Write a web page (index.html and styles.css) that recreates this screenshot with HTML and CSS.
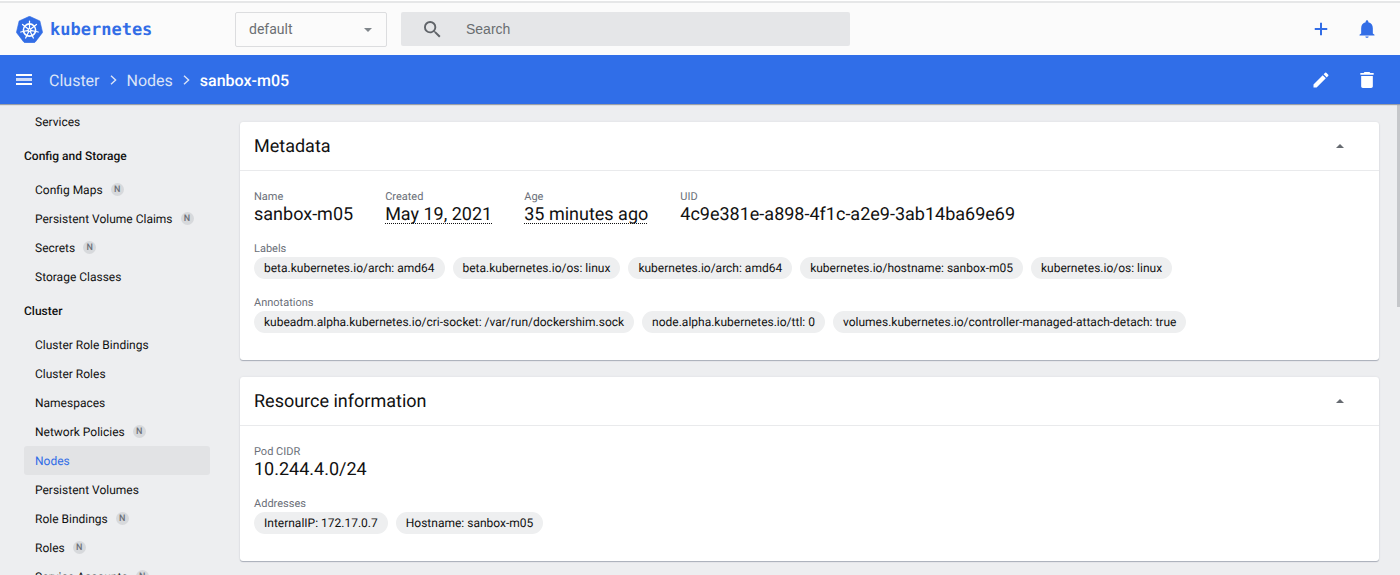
FILE: index.html
```html
<!DOCTYPE html>
<html lang="en">
<head>
<meta charset="utf-8">
<title>sanbox-m05 - Kubernetes Dashboard</title>
<link rel="stylesheet" href="styles.css">
</head>
<body>
<header class="topbar">
  <a class="brand" href="#">
    <svg class="brand-logo" viewBox="0 0 26 26" aria-hidden="true">
      <path fill="#326de6" d="M13 .3 23 4.8 25.6 15.8 18.8 24.7Q18.200 25.700 17 25.700H9Q7.800 25.700 7.200 24.700L.4 15.800 3 4.800Z" stroke="#326de6" stroke-width=".6" stroke-linejoin="round"/>
      <g fill="none" stroke="#fff" stroke-linecap="round">
        <circle cx="13" cy="13.500" r="5.900" stroke-width="1.500"/>
        <path stroke-width="1.200" d="M13 13.500V4.900M13 13.500 19.700 8.100M13 13.500 21.400 15.400M13 13.500 16.700 21.200M13 13.500 9.300 21.200M13 13.500 4.600 15.400M13 13.500 6.300 8.100"/>
      </g>
      <circle cx="13" cy="13.500" r="1.800" fill="#fff"/>
      <circle cx="13" cy="13.500" r=".7" fill="#326de6"/>
    </svg>
    <span class="brand-name">kubernetes</span>
  </a>
  <div class="namespace">
    <select class="namespace-select" aria-label="Namespace"><option>default</option></select>
    <svg class="namespace-arrow" viewBox="0 0 10 5" aria-hidden="true"><path d="M0 0h10L5 5z" fill="#80868b"/></svg>
  </div>
  <form class="search">
    <svg class="search-icon" viewBox="0 0 18 18" aria-hidden="true"><path fill="#5f6368" d="M12.500 11h-.79l-.28-.27A6.470 6.470 0 0 0 13 6.500 6.500 6.500 0 1 0 6.500 13c1.610 0 3.090-.59 4.230-1.570l.27.28v.79l5 4.990L17.490 16l-4.990-5zm-6 0C4.010 11 2 8.990 2 6.500S4.010 2 6.500 2 11 4.010 11 6.500 8.990 11 6.500 11z"/></svg>
    <input class="search-input" type="search" placeholder="Search" aria-label="Search">
  </form>
  <div class="actions">
    <button class="icon-button" type="button" aria-label="Create"><svg class="icon" viewBox="0 0 24 24"><path d="M19.500 13.200h-6.300v6.300h-2.400v-6.300H4.500v-2.400h6.300V4.500h2.400v6.300h6.300z"/></svg></button>
    <button class="icon-button" type="button" aria-label="Notifications"><svg class="icon" viewBox="0 0 24 24"><path d="M12 22.500c1.100 0 2-.7 2-1.600h-4c0 .9.900 1.600 2 1.600zM19 17.500v-6.500c0-3.500-2-6.300-5.400-7.100V3.200C13.600 2.300 12.900 1.500 12 1.500s-1.600.8-1.600 1.700v.7C7 4.700 5 7.500 5 11v6.500l-2 1.300v1h18v-1z"/></svg></button>
  </div>
</header>

<div class="bluebar">
  <button class="menu-button" type="button" aria-label="Toggle menu"><svg class="menu-icon" viewBox="0 0 16 12"><path d="M0 1h16M0 10h16" stroke="#fff" stroke-width="2"/><path d="M0 5.500h16" stroke="#fff" stroke-width="3" stroke-opacity=".75"/></svg></button>
  <nav class="crumbs" aria-label="Breadcrumb">
    <a href="#">Cluster</a>
    <svg class="chevron" viewBox="0 0 7 10" aria-hidden="true"><path d="M1 .7 5.600 5 1 9.300"/></svg>
    <a href="#">Nodes</a>
    <svg class="chevron" viewBox="0 0 7 10" aria-hidden="true"><path d="M1 .7 5.600 5 1 9.300"/></svg>
    <span class="crumb-current">sanbox-m05</span>
  </nav>
  <div class="actions">
    <button class="icon-button light" type="button" aria-label="Edit"><svg class="icon" viewBox="0 0 24 24"><path d="M3 17.250V21h3.750L17.810 9.940l-3.750-3.750L3 17.250zM20.710 7.040a1 1 0 0 0 0-1.410l-2.340-2.340a1 1 0 0 0-1.410 0l-1.830 1.830 3.750 3.750 1.830-1.830z"/></svg></button>
    <button class="icon-button light" type="button" aria-label="Delete"><svg class="icon" viewBox="0 0 24 24"><path d="M5 19.500c0 1.100.9 2 2 2h10c1.100 0 2-.9 2-2V7.200H5v12.300zM20 3.500h-4l-1-1H9l-1 1H4v2.300h16V3.500z"/></svg></button>
  </div>
</div>

<div class="layout">
  <nav class="sidebar" aria-label="Resources">
    <a class="nav-item" href="#">Services</a>
    <h2 class="nav-group">Config and Storage</h2>
    <a class="nav-item" href="#">Config Maps <span class="badge">N</span></a>
    <a class="nav-item" href="#">Persistent Volume Claims <span class="badge">N</span></a>
    <a class="nav-item" href="#">Secrets <span class="badge">N</span></a>
    <a class="nav-item" href="#">Storage Classes</a>
    <h2 class="nav-group">Cluster</h2>
    <a class="nav-item" href="#">Cluster Role Bindings</a>
    <a class="nav-item" href="#">Cluster Roles</a>
    <a class="nav-item" href="#">Namespaces</a>
    <a class="nav-item" href="#">Network Policies <span class="badge">N</span></a>
    <a class="nav-item active" href="#" aria-current="page">Nodes</a>
    <a class="nav-item" href="#">Persistent Volumes</a>
    <a class="nav-item" href="#">Role Bindings <span class="badge">N</span></a>
    <a class="nav-item" href="#">Roles <span class="badge">N</span></a>
    <a class="nav-item" href="#">Service Accounts <span class="badge">N</span></a>
  </nav>

  <main class="content">
    <section class="card">
      <header class="card-header">
        <h1 class="card-title">Metadata</h1>
        <button class="collapse" type="button" aria-label="Collapse Metadata"><svg class="collapse-icon" viewBox="0 0 8 4"><path d="M0 4 4 0l4 4z"/></svg></button>
      </header>
      <div class="card-body">
        <div class="properties">
          <div class="property"><div class="label">Name</div><div class="value">sanbox-m05</div></div>
          <div class="property"><div class="label">Created</div><div class="value"><span class="dotted">May 19, 2021</span></div></div>
          <div class="property"><div class="label">Age</div><div class="value"><span class="dotted">35 minutes ago</span></div></div>
          <div class="property"><div class="label">UID</div><div class="value">4c9e381e-a898-4f1c-a2e9-3ab14ba69e69</div></div>
        </div>
        <div class="property">
          <div class="label">Labels</div>
          <div class="chips">
            <span class="chip">beta.kubernetes.io/arch: amd64</span>
            <span class="chip">beta.kubernetes.io/os: linux</span>
            <span class="chip">kubernetes.io/arch: amd64</span>
            <span class="chip">kubernetes.io/hostname: sanbox-m05</span>
            <span class="chip">kubernetes.io/os: linux</span>
          </div>
        </div>
        <div class="property">
          <div class="label">Annotations</div>
          <div class="chips">
            <span class="chip">kubeadm.alpha.kubernetes.io/cri-socket: /var/run/dockershim.sock</span>
            <span class="chip">node.alpha.kubernetes.io/ttl: 0</span>
            <span class="chip">volumes.kubernetes.io/controller-managed-attach-detach: true</span>
          </div>
        </div>
      </div>
    </section>

    <section class="card">
      <header class="card-header">
        <h1 class="card-title">Resource information</h1>
        <button class="collapse" type="button" aria-label="Collapse Resource information"><svg class="collapse-icon" viewBox="0 0 8 4"><path d="M0 4 4 0l4 4z"/></svg></button>
      </header>
      <div class="card-body">
        <div class="property"><div class="label">Pod CIDR</div><div class="value">10.244.4.0/24</div></div>
        <div class="property">
          <div class="label">Addresses</div>
          <div class="chips">
            <span class="chip">InternalIP: 172.17.0.7</span>
            <span class="chip">Hostname: sanbox-m05</span>
          </div>
        </div>
      </div>
    </section>
  </main>
  <div class="scroll-track" aria-hidden="true"><div class="scroll-thumb"></div></div>
</div>
</body>
</html>
```
FILE: styles.css
```css
* { box-sizing: border-box; }

body {
  margin: 0;
  height: 100vh;
  display: flex;
  flex-direction: column;
  overflow: hidden;
  background: #edeef0;
  color: #111;
  font-family: Roboto, "Liberation Sans", sans-serif;
  font-size: 12px;
  text-rendering: geometricPrecision;
}

a { color: inherit; text-decoration: none; }

button {
  display: flex;
  align-items: center;
  justify-content: center;
  padding: 0;
  border: 0;
  background: none;
  cursor: pointer;
}

/* Top bar */
.topbar {
  flex: none;
  display: flex;
  align-items: center;
  height: 55px;
  padding: 3px 20px 0 16px;
  background: #fbfbfb;
  box-shadow: inset 0 1px #fff, inset 0 3px #e6e7e8;
}

.brand {
  display: flex;
  align-items: center;
  gap: 7px;
  width: 219px;
  color: #326de6;
  font-family: "DejaVu Sans Mono", monospace;
  font-size: 17px;
  font-weight: 700;
}

.brand-logo { width: 27px; height: 27px; }
.brand-name { padding-top: 2px; }

.namespace { position: relative; width: 152px; margin-right: 14px; }

.namespace-select {
  display: block;
  appearance: none;
  width: 100%;
  height: 35px;
  padding: 0 32px 0 13px;
  border: 1px solid #dcdddf;
  border-radius: 2px;
  background: transparent;
  color: #6b6f73;
  font: inherit;
  font-size: 14px;
}

.namespace-arrow {
  position: absolute;
  top: 16px;
  right: 15px;
  width: 8px;
  height: 4px;
  pointer-events: none;
}

.search {
  display: flex;
  align-items: center;
  gap: 25px;
  width: 449px;
  height: 34px;
  padding: 0 23px;
  border-radius: 2px;
  background: #e5e6e8;
}

.search-icon { flex: none; width: 17px; height: 17px; }

.search-input {
  flex: 1;
  min-width: 0;
  padding: 0;
  border: 0;
  outline: 0;
  background: transparent;
  font-family: "Liberation Sans", sans-serif;
  font-size: 14px;
}

.search-input::placeholder { color: #696d70; opacity: 1; }

.actions { display: flex; gap: 19px; margin-left: auto; }

.icon-button { width: 27px; height: 27px; color: #326de6; }
.icon-button.light { color: #fff; }
.icon { width: 20px; height: 20px; fill: currentColor; }

/* Breadcrumb bar */
.bluebar {
  flex: none;
  z-index: 1;
  display: flex;
  align-items: center;
  height: 49px;
  padding: 1px 20px 0 16px;
  background: #306ee8;
  box-shadow: 0 1px 1px #9a9fa8;
  color: #fff;
}

.menu-button { width: 16px; height: 20px; margin-right: 17px; }
.menu-icon { width: 16px; height: 12px; }

.crumbs {
  display: flex;
  align-items: center;
  gap: 10px;
  color: #dbe4f7;
  font-size: 16px;
}

.chevron { width: 7px; height: 10px; fill: none; stroke: #dbe4f7; stroke-width: 1.4; }
.crumb-current { color: #fff; font-weight: 500; }

/* Body */
.layout { flex: 1; min-height: 0; display: flex; }

.sidebar {
  flex: none;
  width: 240px;
  padding: 3px 30px 0 24px;
  overflow: hidden;
}

.nav-item {
  display: flex;
  align-items: center;
  gap: 8px;
  height: 29px;
  padding-left: 11px;
  border-radius: 3px;
}

.nav-item.active { background: #e2e3e5; color: #326de6; }

.nav-group {
  margin: 0;
  padding-top: 2px;
  font-size: 12px;
  font-weight: 500;
  line-height: 37px;
}

.badge {
  width: 13px;
  height: 13px;
  border-radius: 50%;
  background: #d7d9dc;
  color: #6b7078;
  font-size: 9px;
  font-weight: 500;
  line-height: 14px;
  text-align: center;
}

.content {
  flex: 1;
  min-width: 0;
  display: flex;
  flex-direction: column;
  gap: 17px;
  padding: 18px 18px 14px 0;
}

.card {
  border-radius: 3px;
  background: #fff;
  box-shadow: 0 1px 1px #a8adb8, 0 0 2px #d8dadd;
}

.card-header {
  display: flex;
  align-items: center;
  justify-content: space-between;
  height: 49px;
  padding: 0 29px 0 14px;
  border-bottom: 1px solid #e9eaec;
}

.card-title { margin: 0; font-size: 18px; font-weight: 400; }

.collapse { width: 20px; height: 20px; }
.collapse-icon { width: 8px; height: 4px; fill: #666a70; }

.card-body {
  display: flex;
  flex-direction: column;
  gap: 16px;
  padding: 18px 14px 27px;
}

.properties { display: flex; gap: 32px; }

.label { color: #6b7079; font-size: 11px; line-height: 15px; }
.value { margin-top: 1px; font-size: 18px; line-height: 20px; }

.dotted {
  text-decoration: underline dotted 1px;
  text-underline-offset: 3px;
  text-decoration-skip-ink: none;
}

.chips { display: flex; flex-wrap: wrap; gap: 8px; margin-top: 1px; }

.chip {
  padding: 0 10px;
  border-radius: 11px;
  background: #eeeff0;
  line-height: 22px;
}

.scroll-track { flex: none; width: 3px; }
.scroll-thumb { height: 43%; background: #c5c7ca; }
```
